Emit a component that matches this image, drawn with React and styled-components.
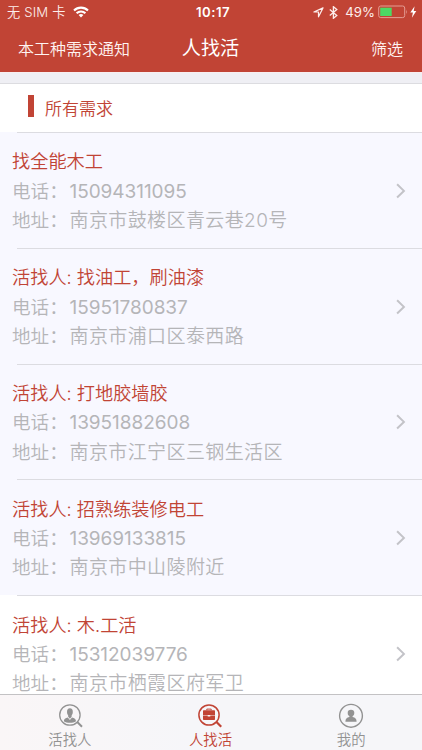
import React from 'react';
import styled, { createGlobalStyle } from 'styled-components';

const RED = '#c14435';
const GREY = '#b5b5b8';

const GlobalStyle = createGlobalStyle`
  * { box-sizing: border-box; }
  body { margin: 0; background: #fff; }
`;

const Screen = styled.div`
  width: 422px;
  height: 750px;
  display: flex;
  flex-direction: column;
  overflow: hidden;
  background: #fff;
  font-family: Inter, "Noto Sans CJK SC", sans-serif;
`;

const Header = styled.header`
  flex: none;
  height: 72px;
  background: ${RED};
  color: #fff;
`;

const StatusBar = styled.div`
  height: 23px;
  display: grid;
  grid-template-columns: 1fr auto 1fr;
  align-items: center;
  padding: 1px 5px 0 7px;
  font-size: 13.2px;
  line-height: 22px;
`;

const Carrier = styled.div`
  display: flex;
  align-items: center;
  gap: 7px;
  font-weight: 350;
  letter-spacing: 0.15px;
  color: #fdeeec;
`;

const Clock = styled.div`
  font-size: 13.2px;
  font-weight: 600;
  letter-spacing: 0.5px;
  padding-left: 2px;
`;

const Indicators = styled.div`
  display: flex;
  align-items: center;
  justify-content: flex-end;
  color: #fdeeec;
  svg { flex: none; }
`;

const Percent = styled.span`
  margin: 0 3px 0 6px;
`;

const NavBar = styled.div`
  height: 49px;
  display: grid;
  grid-template-columns: 1fr auto 1fr;
  align-items: center;
  padding: 2px 19px 0 18px;
`;

const NavAction = styled.span`
  font-size: 16px;
  line-height: 24px;
  font-weight: 350;
  color: #fff4f2;
  justify-self: ${(p) => (p.$end ? 'end' : 'start')};
`;

const NavTitle = styled.h1`
  margin: 0;
  padding-bottom: 2px;
  font-size: 19.2px;
  line-height: 28px;
  font-weight: 400;
`;

const Gap = styled.div`
  flex: none;
  height: 12px;
  background: #efeff4;
  border-top: 1px solid #f8eef0;
  border-bottom: 1px solid #dcdce0;
`;

const SectionHead = styled.div`
  flex: none;
  height: 48px;
  display: flex;
  align-items: center;
  gap: 11px;
  padding: 2px 0 0 28px;
  color: ${RED};
  font-size: 17px;
  font-weight: 350;
  line-height: 26px;
`;

const Marker = styled.i`
  width: 6px;
  height: 22px;
  margin-bottom: 6px;
  background: ${RED};
`;

const List = styled.main`
  flex: 1;
  min-height: 0;
  overflow: hidden;
`;

const Row = styled.article`
  height: 115.8px;
  display: flex;
  flex-direction: column;
  background: ${(p) => (p.$plain ? '#fff' : '#f8f8ff')};
`;

const Divider = styled.div`
  flex: none;
  height: 1px;
  margin-left: 17px;
  background: #dcdce1;
`;

const RowBody = styled.div`
  flex: 1;
  display: flex;
  align-items: center;
  justify-content: space-between;
  padding: 2px 16px 0 12px;
  svg { margin-bottom: 1px; }
`;

const RowTitle = styled.h2`
  margin: 0;
  font-size: 18.2px;
  line-height: 29.3px;
  font-weight: 350;
  color: ${RED};
  white-space: pre;
`;

const Field = styled.div`
  display: flex;
  font-size: 19px;
  line-height: 29.3px;
  font-weight: 350;
  color: ${GREY};
  white-space: nowrap;
`;

const Label = styled.span`
  width: 57.5px;
  font-size: 18.6px;
`;

const Value = styled.span`
  font-weight: ${(p) => (p.$phone ? 400 : 350)};
  letter-spacing: ${(p) => (p.$phone ? '-0.05px' : '0.4px')};
`;

const TabBar = styled.nav`
  flex: none;
  height: 56px;
  display: grid;
  grid-template-columns: repeat(3, 1fr);
  border-top: 1px solid #c3c2c4;
  background: linear-gradient(90deg, #faf6f7, #f6f6f9 45%, #f6f6f9);
`;

const Tab = styled.div`
  display: flex;
  flex-direction: column;
  align-items: center;
  padding: 8px 1px 0 0;
  color: ${(p) => (p.$active ? RED : '#929292')};
  font-size: 14.4px;
  font-weight: 350;
  line-height: 22px;
  svg { flex: none; }
`;

const WifiIcon = () => (
  <svg width="16" height="12" viewBox="0 0 16 12" fill="none" stroke="#fff" strokeWidth="2.1">
    <path d="M1 4.5a10 10 0 0 1 14 0" />
    <path d="M3.6 7.3a6.2 6.2 0 0 1 8.8 0" />
    <path d="M8 11.6 5.6 9.1a3.5 3.5 0 0 1 4.8 0Z" fill="#fff" stroke="none" />
  </svg>
);

const LocationIcon = () => (
  <svg width="11" height="11" viewBox="0 0 11 11" fill="none" stroke="currentColor" strokeWidth="1.2">
    <path d="M10 .9.9 5h4.6v4.8Z" strokeLinejoin="round" />
  </svg>
);

const BluetoothIcon = () => (
  <svg width="15" height="13" viewBox="-9 0 15 13" fill="none" stroke="currentColor" strokeWidth="1.3">
    <path d="m-3.2 3.5 7 6L.4 12.3V.7l3.4 2.8-7 6" />
  </svg>
);

const BatteryIcon = () => (
  <svg width="39" height="14" viewBox="0 0 39 14">
    <rect x=".7" y="1" width="26" height="11.6" rx="2" fill="none" stroke="#e59d94" strokeWidth="1" />
    <rect x="2.2" y="2.7" width="11.5" height="8.3" fill="#4cd964" />
    <path d="M28.3 4.6q1.5 2.2 0 4.4Z" fill="#e59d94" />
    <path d="m36.6 1.2-4.3 6.2h2.6l-1 5.3 4.4-6.7h-2.6Z" fill="#fff" />
  </svg>
);

const ChevronIcon = () => (
  <svg width="10" height="16" viewBox="0 0 10 16" fill="none" stroke="#c3c3c8" strokeWidth="2">
    <path d="m1.1 1.3 6.8 6.6-6.8 6.6" />
  </svg>
);

const WorkerSearchIcon = () => (
  <svg width="26" height="26" viewBox="0 0 26 26" fill="none" stroke="currentColor">
    <circle cx="12.9" cy="12" r="10.2" strokeWidth="1.3" />
    <path d="m20 18.7 5 5" strokeWidth="2" />
    <g fill="currentColor" stroke="none">
      <ellipse cx="12.9" cy="8.9" rx="2.9" ry="3.6" />
      <path d="M11.2 11.5h3.4v2.3l-1.7 2-1.7-2Z" />
      <path d="M6.8 18.2c.1-2.3 1.6-3 4-3.8l2.1 2.6 2.1-2.6c2.4.8 3.9 1.5 4 3.8-3 2-9.2 2-12.2 0Z" />
    </g>
  </svg>
);

const JobSearchIcon = () => (
  <svg width="26" height="26" viewBox="0 0 26 26" fill="none" stroke="currentColor">
    <circle cx="12" cy="12" r="10.1" strokeWidth="1.5" />
    <path d="m19.2 18.7 5 5" strokeWidth="2.2" />
    <path d="M9.8 7.3V6.1h4.4v1.2" strokeWidth="1" />
    <path d="M6.7 7.2h10.6q.7 0 .7.7v4.2H6V7.9q0-.7.7-.7ZM6 12.6h4.7v.8h2.6v-.8H18v3.7q0 .7-.7.7H6.7q-.7 0-.7-.7Z" fill="currentColor" stroke="none" />
  </svg>
);

const ProfileIcon = () => (
  <svg width="26" height="26" viewBox="0 0 26 26" fill="none" stroke="currentColor">
    <circle cx="13" cy="12.8" r="11.4" strokeWidth="1.4" />
    <g fill="currentColor" stroke="none">
      <circle cx="13" cy="10" r="3.3" />
      <path d="M11.4 12h3.2v2c2.6.4 4 1.7 4 4.8H7.4c0-3.1 1.4-4.4 4-4.8Z" />
    </g>
  </svg>
);

const jobs = [
  { title: '找全能木工', phone: '15094311095', address: '南京市鼓楼区青云巷20号' },
  { title: '活找人: 找油工，刷油漆', phone: '15951780837', address: '南京市浦口区泰西路' },
  { title: '活找人: 打地胶墙胶', phone: '13951882608', address: '南京市江宁区三钢生活区' },
  { title: '活找人: 招熟练装修电工', phone: '13969133815', address: '南京市中山陵附近' },
  { title: '活找人: 木.工活', phone: '15312039776', address: '南京市栖霞区府军卫', plain: true },
];

const tabs = [
  { label: '活找人', Icon: WorkerSearchIcon },
  { label: '人找活', Icon: JobSearchIcon, active: true },
  { label: '我的', Icon: ProfileIcon },
];

function JobRow({ job }) {
  return (
    <Row $plain={job.plain}>
      <Divider />
      <RowBody>
        <div>
          <RowTitle>{job.title}</RowTitle>
          <Field><Label>电话：</Label><Value $phone>{job.phone}</Value></Field>
          <Field><Label>地址：</Label><Value>{job.address}</Value></Field>
        </div>
        <ChevronIcon />
      </RowBody>
    </Row>
  );
}

export default function App() {
  return (
    <Screen>
      <GlobalStyle />
      <Header>
        <StatusBar>
          <Carrier>无 SIM 卡 <WifiIcon /></Carrier>
          <Clock>10:17</Clock>
          <Indicators>
            <LocationIcon />
            <BluetoothIcon />
            <Percent>49%</Percent>
            <BatteryIcon />
          </Indicators>
        </StatusBar>
        <NavBar>
          <NavAction>本工种需求通知</NavAction>
          <NavTitle>人找活</NavTitle>
          <NavAction $end>筛选</NavAction>
        </NavBar>
      </Header>
      <Gap />
      <SectionHead><Marker />所有需求</SectionHead>
      <List>
        {jobs.map((job) => <JobRow key={job.phone} job={job} />)}
      </List>
      <TabBar>
        {tabs.map(({ label, Icon, active }) => (
          <Tab key={label} $active={active}><Icon />{label}</Tab>
        ))}
      </TabBar>
    </Screen>
  );
}
